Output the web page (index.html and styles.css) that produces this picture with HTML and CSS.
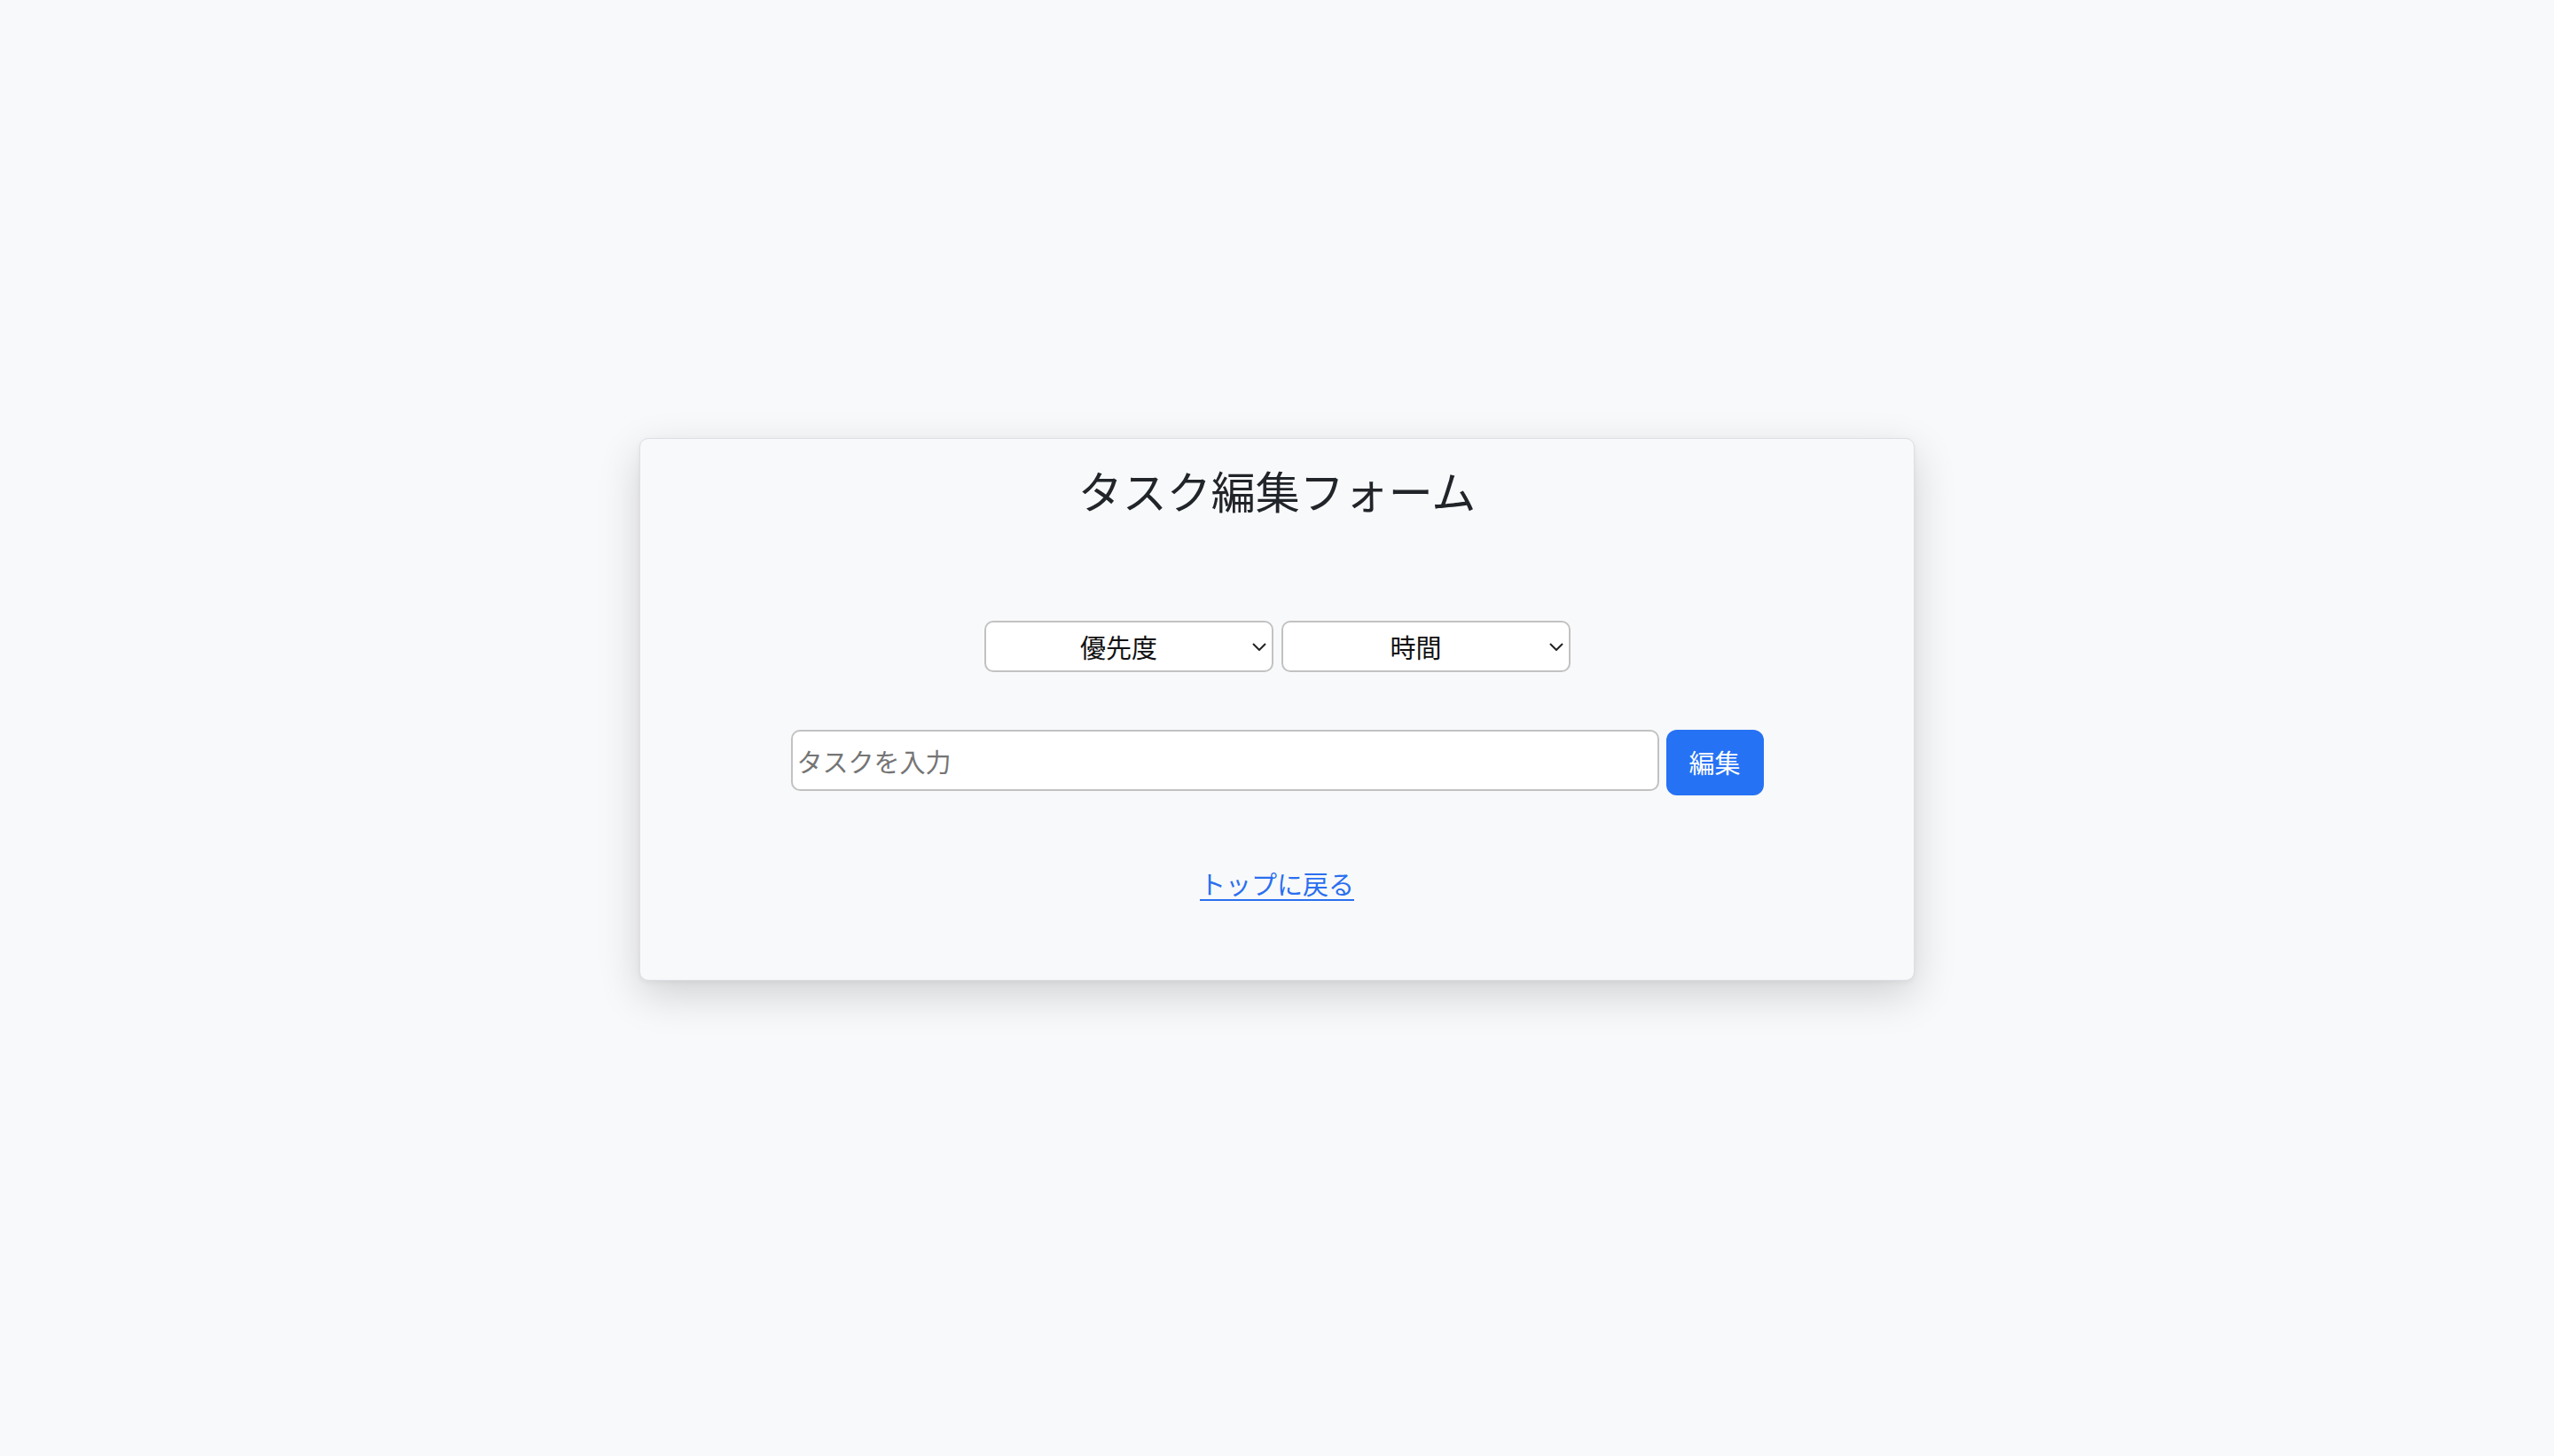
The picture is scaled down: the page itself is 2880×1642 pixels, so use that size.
FILE: index.html
```html
<!DOCTYPE html>
<html lang="ja">
<head>
<meta charset="utf-8">
<title>タスク編集フォーム</title>
<link rel="stylesheet" href="styles.css">
</head>
<body>
  <main class="card">
    <h1 class="title">タスク編集フォーム</h1>
    <div class="selects">
      <div class="select-wrap">
        <select class="select">
          <option>優先度</option>
        </select>
        <svg class="chevron" viewBox="0 0 16 9" width="16" height="9"><path d="M1 1 L8 8 L15 1" fill="none" stroke="#222" stroke-width="2"/></svg>
      </div>
      <div class="select-wrap">
        <select class="select">
          <option>時間</option>
        </select>
        <svg class="chevron" viewBox="0 0 16 9" width="16" height="9"><path d="M1 1 L8 8 L15 1" fill="none" stroke="#222" stroke-width="2"/></svg>
      </div>
    </div>
    <form class="task-row">
      <input class="task-input" type="text" placeholder="タスクを入力">
      <button class="btn" type="button">編集</button>
    </form>
    <a class="back-link" href="#">トップに戻る</a>
  </main>
</body>
</html>
```
FILE: styles.css
```css
html, body {
  margin: 0;
  padding: 0;
}
body {
  background: #f8f9fa;
  min-height: 100vh;
  box-sizing: border-box;
  padding-bottom: 42px;
  display: flex;
  align-items: center;
  justify-content: center;
  font-family: "Noto Sans CJK JP", "Noto Sans", sans-serif;
  color: #212529;
}
.card {
  width: 1438px;
  height: 612px;
  box-sizing: border-box;
  background: #f8f9fa;
  border: 1px solid #dcdfe4;
  border-radius: 10px;
  box-shadow: 0 16px 48px rgba(0, 0, 0, 0.16), 0 2px 6px rgba(0, 0, 0, 0.05);
  padding-top: 26px;
  display: flex;
  flex-direction: column;
  align-items: center;
}
.title {
  margin: 0;
  font-size: 50px;
  line-height: 62px;
  font-weight: 400;
  color: #212529;
}
.selects {
  margin-top: 117px;
  display: flex;
  gap: 9px;
}
.select-wrap {
  position: relative;
  width: 326px;
  height: 58px;
}
.select {
  width: 100%;
  height: 100%;
  box-sizing: border-box;
  appearance: none;
  -webkit-appearance: none;
  background: #fff;
  border: 2px solid #c2c2c2;
  border-radius: 10px;
  padding: 0 32px 0 10px;
  font-family: "Noto Sans CJK JP", "Noto Sans", sans-serif;
  font-size: 29px;
  color: #111;
  text-align: center;
  text-align-last: center;
}
.chevron {
  position: absolute;
  right: 8px;
  top: 25px;
  pointer-events: none;
}
.task-row {
  margin: 65px 0 0;
  display: flex;
  align-items: flex-start;
  gap: 8px;
}
.task-input {
  width: 979px;
  height: 69px;
  box-sizing: border-box;
  border: 2px solid #c2c2c2;
  border-radius: 10px;
  background: #fff;
  padding: 0 5px;
  font-family: "Noto Sans CJK JP", "Noto Sans", sans-serif;
  font-size: 29px;
  color: #212529;
}
.task-input::placeholder {
  color: #757575;
}
.btn {
  width: 110px;
  height: 74px;
  border: none;
  border-radius: 12px;
  background: #2672f4;
  color: #fff;
  font-family: "Noto Sans CJK JP", "Noto Sans", sans-serif;
  font-size: 29px;
  padding: 0 0 2px;
}
.back-link {
  margin-top: 78px;
  font-size: 29px;
  line-height: 42px;
  color: #2a6ff0;
  text-decoration: underline;
  text-underline-offset: 5px;
  text-decoration-thickness: 2px;
}
```
